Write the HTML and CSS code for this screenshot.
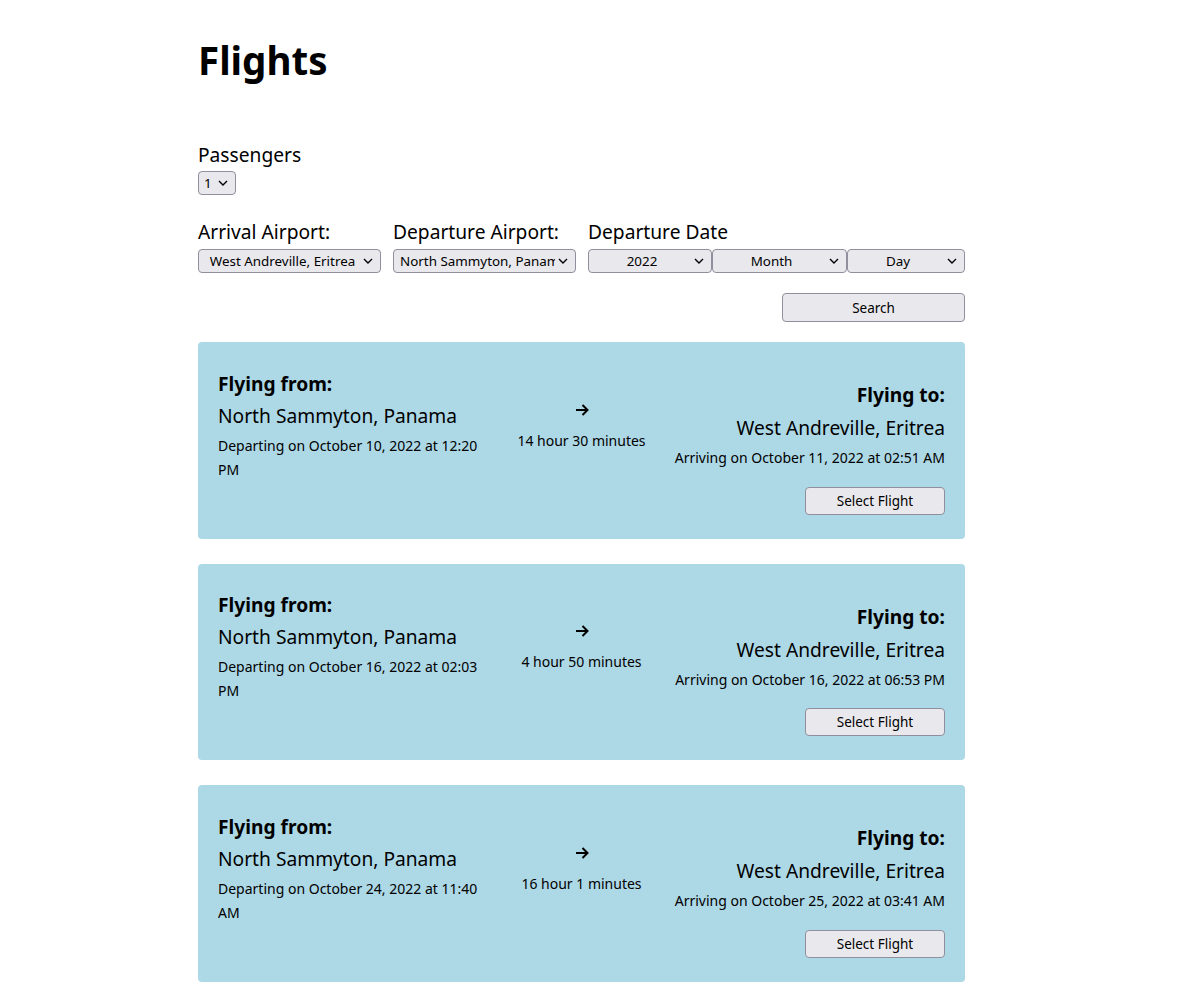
FILE: index.html
```html
<!DOCTYPE html>
<html lang="en">
<head>
<meta charset="utf-8">
<title>Flights</title>
<link rel="stylesheet" href="styles.css">
</head>
<body>
<main class="page">
  <h1 class="title">Flights</h1>

  <div class="field passengers">
    <label class="label" for="pax">Passengers</label>
    <select id="pax" class="select select-pax">
      <option>1</option><option>2</option><option>3</option><option>4</option>
    </select>
  </div>

  <div class="filters">
    <div class="field">
      <label class="label" for="arr">Arrival Airport:</label>
      <select id="arr" class="select select-airport">
        <option>West Andreville, Eritrea</option>
      </select>
    </div>
    <div class="field">
      <label class="label" for="dep">Departure Airport:</label>
      <select id="dep" class="select select-airport">
        <option>North Sammyton, Panama</option>
      </select>
    </div>
    <div class="field field-date">
      <label class="label" for="year">Departure Date</label>
      <div class="date-row">
        <select id="year" class="select select-year"><option>2022</option></select>
        <select class="select select-month"><option>Month</option></select>
        <select class="select select-day"><option>Day</option></select>
      </div>
    </div>
  </div>

  <div class="search-row">
    <button class="btn btn-search" type="button">Search</button>
  </div>

  <section class="results">
    <article class="card">
      <div class="card-row">
        <div class="col col-from">
          <h3 class="col-title">Flying from:</h3>
          <p class="place">North Sammyton, Panama</p>
          <p class="when">Departing on October 10, 2022 at 12:20 PM</p>
        </div>
        <div class="col col-mid">
          <svg class="arrow" width="14" height="12" viewBox="0 0 14 12" aria-hidden="true"><path d="M1 6 H12.5 M7.5 1 L12.5 6 L7.5 11" fill="none" stroke="#000" stroke-width="2"/></svg>
          <p class="duration">14 hour 30 minutes</p>
        </div>
        <div class="col col-to">
          <h3 class="col-title">Flying to:</h3>
          <p class="place">West Andreville, Eritrea</p>
          <p class="when">Arriving on October 11, 2022 at 02:51 AM</p>
        </div>
      </div>
      <div class="card-actions">
        <button class="btn btn-select" type="button">Select Flight</button>
      </div>
    </article>

    <article class="card">
      <div class="card-row">
        <div class="col col-from">
          <h3 class="col-title">Flying from:</h3>
          <p class="place">North Sammyton, Panama</p>
          <p class="when">Departing on October 16, 2022 at 02:03 PM</p>
        </div>
        <div class="col col-mid">
          <svg class="arrow" width="14" height="12" viewBox="0 0 14 12" aria-hidden="true"><path d="M1 6 H12.5 M7.5 1 L12.5 6 L7.5 11" fill="none" stroke="#000" stroke-width="2"/></svg>
          <p class="duration">4 hour 50 minutes</p>
        </div>
        <div class="col col-to">
          <h3 class="col-title">Flying to:</h3>
          <p class="place">West Andreville, Eritrea</p>
          <p class="when">Arriving on October 16, 2022 at 06:53 PM</p>
        </div>
      </div>
      <div class="card-actions">
        <button class="btn btn-select" type="button">Select Flight</button>
      </div>
    </article>

    <article class="card">
      <div class="card-row">
        <div class="col col-from">
          <h3 class="col-title">Flying from:</h3>
          <p class="place">North Sammyton, Panama</p>
          <p class="when">Departing on October 24, 2022 at 11:40 AM</p>
        </div>
        <div class="col col-mid">
          <svg class="arrow" width="14" height="12" viewBox="0 0 14 12" aria-hidden="true"><path d="M1 6 H12.5 M7.5 1 L12.5 6 L7.5 11" fill="none" stroke="#000" stroke-width="2"/></svg>
          <p class="duration">16 hour 1 minutes</p>
        </div>
        <div class="col col-to">
          <h3 class="col-title">Flying to:</h3>
          <p class="place">West Andreville, Eritrea</p>
          <p class="when">Arriving on October 25, 2022 at 03:41 AM</p>
        </div>
      </div>
      <div class="card-actions">
        <button class="btn btn-select" type="button">Select Flight</button>
      </div>
    </article>
  </section>
</main>
</body>
</html>
```

FILE: styles.css
```css
* {
  box-sizing: border-box;
}

html, body {
  margin: 0;
  padding: 0;
  background: #ffffff;
}

body {
  font-family: "Noto Sans", "DejaVu Sans", sans-serif;
  color: #000000;
  padding-right: 14px;
}

.page {
  width: 767px;
  margin: 0 auto;
  padding-top: 34px;
}

.title {
  margin: 0;
  font-size: 38.5px;
  line-height: 52px;
  font-weight: 700;
}

.field {
  display: flex;
  flex-direction: column;
  align-items: flex-start;
}

.passengers {
  margin-top: 55px;
}

.label {
  font-size: 19.2px;
  line-height: 27px;
  margin-bottom: 3px;
}

.filters .label {
  margin-bottom: 4px;
}

.select {
  appearance: none;
  -webkit-appearance: none;
  height: 24px;
  margin: 0;
  padding: 0 22px 0 6px;
  font-family: "Noto Sans", "DejaVu Sans", sans-serif;
  font-size: 13.4px;
  color: #000000;
  background-color: #e9e9ed;
  background-image: url("data:image/svg+xml;utf8,<svg xmlns='http://www.w3.org/2000/svg' width='10' height='6' viewBox='0 0 10 6'><path d='M1 1 L5 5 L9 1' fill='none' stroke='%23000' stroke-width='1.4'/></svg>");
  background-repeat: no-repeat;
  background-position: right 7px center;
  background-size: 10px 6px;
  border: 1px solid #8f8f9d;
  border-radius: 4px;
  text-align: center;
  text-align-last: center;
}

.select-pax {
  width: 38px;
  text-align: left;
  text-align-last: left;
  padding-left: 5px;
}

.filters {
  display: flex;
  gap: 12px;
  margin-top: 23px;
}

.select-airport {
  width: 183px;
  padding-right: 20px;
}

.field-date {
  width: 377px;
}

.date-row {
  display: flex;
  width: 100%;
}

.select-year {
  width: 124px;
}

.select-month {
  width: 135px;
}

.select-day {
  width: 118px;
}

.search-row {
  display: flex;
  justify-content: flex-end;
  margin-top: 20px;
}

.btn {
  font-family: "Noto Sans", "DejaVu Sans", sans-serif;
  font-size: 13.5px;
  color: #000000;
  background: #e9e9ed;
  border: 1px solid #8f8f9d;
  border-radius: 4px;
  padding: 0;
  cursor: pointer;
}

.btn-search {
  width: 183px;
  height: 29px;
}

.results {
  display: flex;
  flex-direction: column;
  gap: 25px;
  margin-top: 20px;
  padding-bottom: 25px;
}

.card {
  background: #add8e6;
  border-radius: 4px;
  padding: 26.5px 20px 24px;
}

.card-row {
  display: grid;
  grid-template-columns: 1fr 180px 1fr;
  align-items: center;
}

.col {
  display: flex;
  flex-direction: column;
}

.col-mid {
  align-items: center;
}

.col-to {
  align-items: flex-end;
  text-align: right;
}

.col-title {
  margin: 0;
  font-size: 19.2px;
  line-height: 30px;
  font-weight: 700;
}

.place {
  margin: 2px 0 0;
  font-size: 19.2px;
  line-height: 30px;
}

.col-to .place {
  margin-top: 3px;
}

.when {
  margin: 3px 0 0;
  font-size: 14px;
  line-height: 24px;
}

.arrow {
  display: block;
  margin: 6px 0;
}

.duration {
  margin: 7px 0 0;
  font-size: 14px;
  line-height: 24px;
}

.card-actions {
  display: flex;
  justify-content: flex-end;
  margin-top: 5px;
}

.btn-select {
  width: 140px;
  height: 28px;
}
```
